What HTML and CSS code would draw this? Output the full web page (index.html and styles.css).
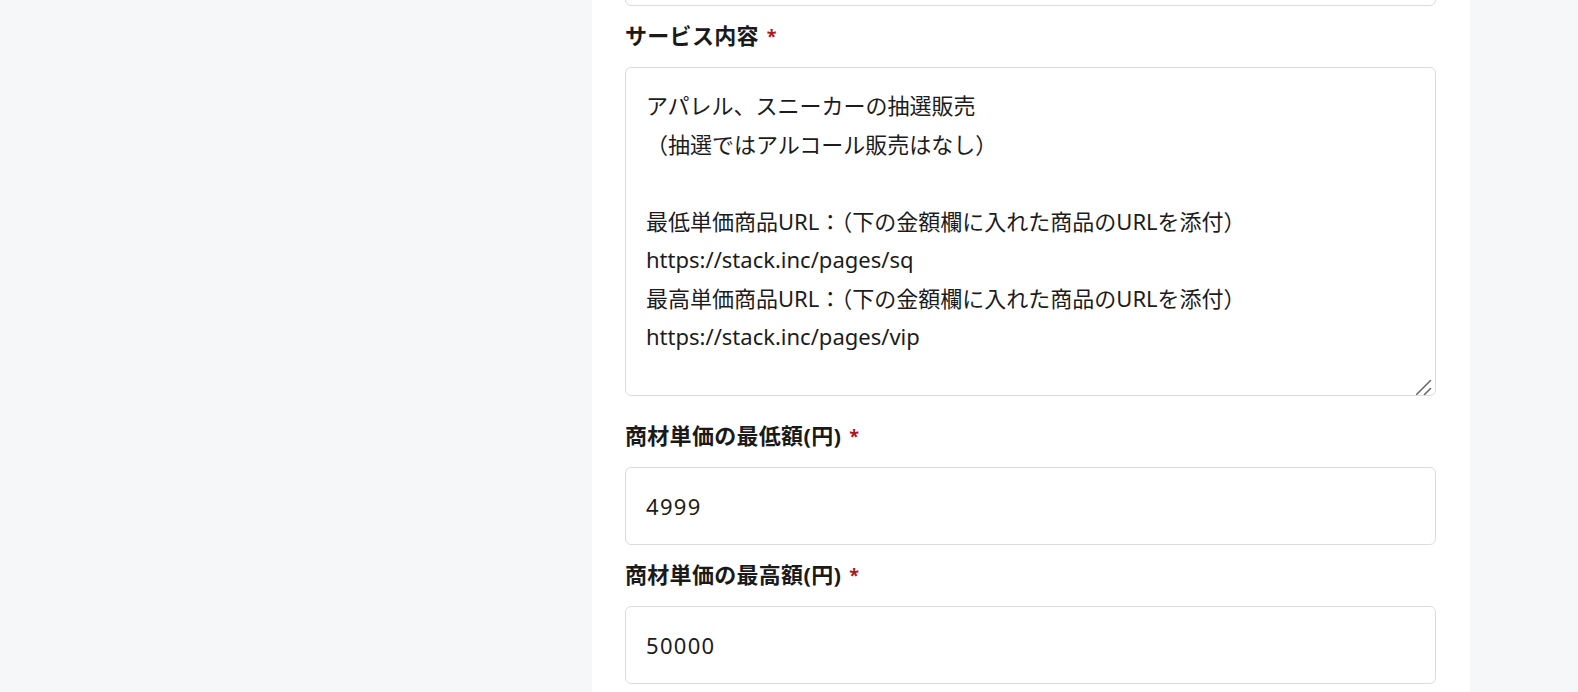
FILE: index.html
```html
<!DOCTYPE html>
<html lang="ja">
<head>
<meta charset="utf-8">
<title>フォーム</title>
<link rel="stylesheet" href="styles.css">
</head>
<body>
<div class="page">
  <aside class="side"></aside>
  <main class="card">
    <form class="form">
      <div class="field field-first">
        <input class="input" type="text" value="" aria-label="前の項目">
      </div>
      <div class="field">
        <label class="label" for="svc">サービス内容<span class="req">*</span></label>
        <div class="ta-wrap">
          <textarea id="svc" class="textarea">アパレル、スニーカーの抽選販売
（抽選ではアルコール販売はなし）

最低単価商品URL：（下の金額欄に入れた商品のURLを添付）
https://stack.inc/pages/sq
最高単価商品URL：（下の金額欄に入れた商品のURLを添付）
https://stack.inc/pages/vip</textarea>
          <svg class="grip" width="16" height="16" viewBox="0 0 16 16" aria-hidden="true">
            <path d="M0.5 15.5 L14.5 1.5 M8.5 15.5 L14.5 9.5" stroke="#666" stroke-width="1.5" stroke-linecap="round" fill="none"/>
          </svg>
        </div>
      </div>
      <div class="field">
        <label class="label" for="min">商材単価の最低額(円)<span class="req">*</span></label>
        <input id="min" class="input num" type="text" value="4999">
      </div>
      <div class="field">
        <label class="label" for="max">商材単価の最高額(円)<span class="req">*</span></label>
        <input id="max" class="input num" type="text" value="50000">
      </div>
    </form>
  </main>
  <div class="side"></div>
</div>
</body>
</html>
```

FILE: styles.css
```css
* { box-sizing: border-box; }
html, body {
  margin: 0;
  padding: 0;
  background: #f6f7f9;
  font-family: "Noto Sans", "Noto Sans CJK JP", sans-serif;
  color: #1c1c1c;
  overflow: hidden;
}
.page {
  display: grid;
  grid-template-columns: 592px 878px 1fr;
  min-height: 692px;
}
.card {
  background: #ffffff;
  padding: 0 34px 0 33px;
}
.form {
  display: flex;
  flex-direction: column;
  margin-top: -72px;
}
.field {
  display: flex;
  flex-direction: column;
  margin-top: 13px;
}
.field-first { margin-top: 0; }
.label {
  font-size: 22px;
  line-height: 33px;
  font-weight: 700;
  color: #1a1a1a;
  margin-bottom: 14px;
  letter-spacing: 0.3px;
}
.req {
  color: #b0141e;
  margin-left: 8px;
  font-size: 18px;
  font-weight: 700;
  vertical-align: 1px;
}
.input, .textarea {
  display: block;
  width: 100%;
  font-family: inherit;
  font-size: 22px;
  color: #1c1c1c;
  background: #fff;
  border: 1px solid #dcdcdc;
  border-radius: 6px;
  outline: none;
}
.input {
  height: 78px;
  padding: 0 20px;
}
.num { letter-spacing: 1.3px; }
.ta-wrap {
  position: relative;
  margin-bottom: 10px;
}
.textarea {
  height: 329px;
  line-height: 38.5px;
  padding: 18px 20px;
  resize: none;
}
.grip {
  position: absolute;
  right: 4px;
  bottom: 1px;
}
```
